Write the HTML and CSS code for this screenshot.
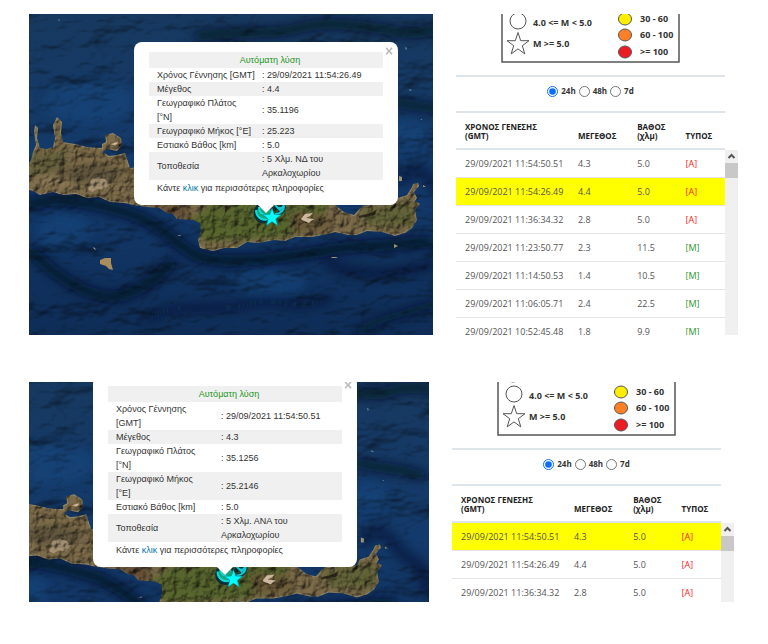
FILE: index.html
```
<!DOCTYPE html>
<html lang="el">

<head>
    <meta charset="UTF-8">
    <meta name="viewport" content="width=device-width, initial-scale=1.0">
    <title>Σεισμικότητα</title>
    <link rel="stylesheet" href="styles.css">
</head>

<body>
    <!-- shared drawings: base map and legend symbols -->
    <svg class="shared" width="0" height="0" aria-hidden="true">
        <defs>
            <linearGradient id="sea" x1="0" y1="0" x2="0" y2="1">
                <stop offset="0" stop-color="#173960" />
                <stop offset="0.5" stop-color="#133a6c" />
                <stop offset="1" stop-color="#0e2c56" />
            </linearGradient>
            <filter id="soft" x="-20%" y="-50%" width="140%" height="200%">
                <feGaussianBlur stdDeviation="5" />
            </filter>
            <filter id="soft-land">
                <feGaussianBlur stdDeviation="3" />
            </filter>
            <filter id="seabed" x="0" y="0" width="100%" height="100%" color-interpolation-filters="sRGB">
                <feTurbulence type="fractalNoise" baseFrequency="0.018 0.03" numOctaves="4" seed="21" />
                <feDiffuseLighting surfaceScale="8" diffuseConstant="1.15" lighting-color="#ffffff">
                    <feDistantLight azimuth="235" elevation="60" />
                </feDiffuseLighting>
            </filter>
            <filter id="relief" x="0" y="0" width="100%" height="100%" color-interpolation-filters="sRGB">
                <feTurbulence type="fractalNoise" baseFrequency="0.12" numOctaves="3" seed="4" />
                <feDiffuseLighting surfaceScale="3" diffuseConstant="1.1" lighting-color="#ffffff">
                    <feDistantLight azimuth="225" elevation="55" />
                </feDiffuseLighting>
            </filter>
            <path id="coast" d="M-2 153L2 146 4 138 7 131 5 118 6 111 9 114 8 124 11 134 18 135 24 133 26 124 24 111 28 103 33 108 32 119 34 128 46 130 58 133 73 134 73 130 77 128 76 121 84 119 92 124 93 131 88 137 78 135 74 138 80 142 88 141 96 139 101 154 140 150 220 150 290 160 306 191 315 198 325 201 333 192 350 190 366 190 369 184 378 181 383 173 384 170 389 169 390 172 385 178 388 184 386 187 391 190 386 196 388 206 383 214 376 219 366 222 353 218 338 217 328 221 319 221 306 218 299 220 283 223 266 223 256 227 246 226 229 229 218 228 208 234 196 234 184 237 171 234 169 226 172 217 171 209 164 206 148 205 144 200 138 199 130 194 118 193 104 191 96 189 81 188 70 183 58 184 47 180 34 181 24 178 11 181 6 178 -2 175Z" />
            <clipPath id="land-clip">
                <use href="#coast" />
            </clipPath>
        </defs>

        <symbol id="crete" viewBox="0 0 445 325">
            <rect width="445" height="325" fill="url(#sea)" />
            <g filter="url(#soft)" fill="none" stroke="#04101f" stroke-linecap="round">
                <path d="M0 190C30 182 60 188 95 198S140 225 165 240S280 240 300 236S350 232 400 228" stroke-width="11" opacity="0.8" />
                <path d="M5 240C30 265 60 282 82 283S130 262 142 250" stroke-width="11" opacity="0.75" />
                <path d="M120 304C150 285 190 300 220 290S260 300 300 285" stroke-width="7" opacity="0.5" />
                <path d="M300 250C330 262 360 262 405 250" stroke-width="12" opacity="0.4" />
                <path d="M330 318C350 302 380 300 404 290" stroke-width="8" opacity="0.6" />
                <path d="M368 88C385 94 400 90 430 100M170 22C205 16 240 22 270 14S340 12 370 18S400 8 440 14" stroke-width="10" opacity="0.7" />
                <path d="M375 165C395 140 400 175 420 185S430 215 445 220" stroke-width="14" opacity="0.4" />
            </g>
            <g filter="url(#soft)" fill="#17467e" opacity="0.6">
                <ellipse cx="35" cy="218" rx="28" ry="18" />
                <ellipse cx="240" cy="268" rx="38" ry="14" />
                <ellipse cx="60" cy="88" rx="45" ry="22" />
                <ellipse cx="378" cy="122" rx="20" ry="14" />
            </g>
            <rect class="shade" width="445" height="325" filter="url(#seabed)" opacity="0.75" />

            <g clip-path="url(#land-clip)">
                <use href="#coast" fill="#7d6c4a" stroke="#968968" stroke-width="2" />
                <g filter="url(#soft-land)">
                    <path d="M160 206L185 188H300L290 215 250 224 175 228Z" fill="#59662f" />
                    <path d="M330 195L385 188 385 212 340 212Z" fill="#626338" />
                    <path d="M0 140L40 136 34 156 0 162Z" fill="#67623e" />
                    <ellipse cx="60" cy="160" rx="34" ry="9" fill="#62563d" />
                    <ellipse cx="25" cy="168" rx="18" ry="5" fill="#907b58" />
                    <path d="M110 190L155 191 163 203 150 205Z" fill="#644d35" />
                    <path d="M262 198L300 200 300 216 262 218Z" fill="#6a5a38" />
                </g>
                <path d="M61 166l8-3 7 2 5 5-5 6-8-1-4 3-7-3 5-3z" fill="#b8a284" opacity="0.7" />
                <path d="M81 130l8-2-2 4z" fill="#d9ba93" />
                <path d="M330 202l12-3 6-4-2 6-16 3zM196 192l6 0-6 7z" fill="#382e20" />
                <rect class="shade" width="445" height="325" filter="url(#relief)" />
                <path d="M272 205l4-5 8-1-3 3-4 2 8 1-3 2-2 2-7-3z" fill="#cdb8a0" />
            </g>
            <path d="M71 246l5-2 6 0 0 5 2 7-4-1-3-3-6-2z" fill="#a98d5b" />
            <path d="M64 233l2 1 1 2-2-1zM302 243h7l-2 1h-4zM365 230l4 2-4 2zM370 162l3 1 0 4-3 0zM394 171l3 2-3 0zM148 222l3-1 1 1z" fill="#9a9474" />
            <path d="M29 5l2 1-1 1zM376 33l2 1-1 2zM380 75l3 1-2 1zM391 105l2 0 0 1z" fill="#75939c" />

            <!-- epicentres -->
            <circle cx="235" cy="199" r="9" fill="#13a779" stroke="#06303a" stroke-width="3" />
            <path d="M227 196c0 8 8 12 15 8M230 193c0 5 3 8 7 8" fill="none" stroke="#10d9dc" stroke-width="2" />
            <path d="M246 191l5 5 4-5M246 200c5 0 9-3 9-8M248 194h7" fill="none" stroke="#06303a" stroke-width="4" />
            <path d="M246 191l5 5 4-5M246 200c5 0 9-3 9-8M248 194h7" fill="none" stroke="#10c9d2" stroke-width="2" />
            <path d="M243 194l2.300 6.500 7 .2-5.500 4.200 2 6.800-5.800-4-5.800 4 2-6.800-5.500-4.200 7-.2z" fill="#00ffff" stroke="#0b7f86" stroke-width="0.600" />
        </symbol>

        <symbol id="legend-signs" viewBox="0 0 180 54">
            <path d="M1 -2V53H178V-2" fill="none" stroke="#555" stroke-width="1.500" />
            <g fill="#fff" stroke="#555">
                <circle cx="16" cy="-7" r="7" />
                <circle cx="17" cy="12" r="8" />
                <path d="M17 23.500l2.700 8.200h8.300l-6.700 5 2.500 8.200-6.800-5-6.800 5 2.500-8.200-6.700-5h8.300z" />
            </g>
            <g stroke="#555">
                <ellipse cx="124" cy="10" rx="6.500" ry="6" fill="#ffee00" />
                <ellipse cx="124" cy="26" rx="6.500" ry="6" fill="#ff7f27" />
                <ellipse cx="124" cy="43" rx="6.500" ry="6" fill="#ed1c24" />
            </g>
        </symbol>
    </svg>

    <section class="view view-large">
        <div class="map">
            <svg class="map-image" viewBox="0 0 404 321" preserveAspectRatio="xMinYMin slice">
                <use href="#crete" width="445" height="325" />
            </svg>
            <div class="popup popup-first">
                <button class="popup-close" aria-label="Κλείσιμο">×</button>
                <table class="popup-table">
                    <colgroup><col class="popup-label"><col></colgroup>
                    <tr><th colspan="2">Αυτόματη λύση</th></tr>
                    <tr><td>Χρόνος Γέννησης [GMT]</td><td>: 29/09/2021 11:54:26.49</td></tr>
                    <tr><td>Μέγεθος</td><td>: 4.4</td></tr>
                    <tr><td>Γεωγραφικό Πλάτος<br>[°N]</td><td>: 35.1196</td></tr>
                    <tr><td>Γεωγραφικό Μήκος [°E]</td><td>: 25.223</td></tr>
                    <tr><td>Εστιακό Βάθος [km]</td><td>: 5.0</td></tr>
                    <tr><td>Τοποθεσία</td><td>: 5 Χλμ. ΝΔ του<br>Αρκαλοχωρίου</td></tr>
                </table>
                <p class="popup-more">Κάντε <a href="#">κλικ</a> για περισσότερες πληροφορίες</p>
            </div>
        </div>

        <div class="panel">
            <svg class="legend" viewBox="0 5 180 49" width="180" height="49">
                <use href="#legend-signs" width="180" height="54" />
                <text x="32" y="17">4.0 &lt;= M &lt; 5.0</text>
                <text x="32" y="38">M &gt;= 5.0</text>
                <text x="139" y="13">30 - 60</text>
                <text x="139" y="29">60 - 100</text>
                <text x="139" y="46">&gt;= 100</text>
            </svg>
            <form class="filter">
                <label><input type="radio" name="range1" checked>24h</label>
                <label><input type="radio" name="range1">48h</label>
                <label><input type="radio" name="range1">7d</label>
            </form>
            <div class="list">
                <table class="events">
                    <thead>
                        <tr><th>ΧΡΟΝΟΣ ΓΕΝΕΣΗΣ<br>(GMT)</th><th>ΜΕΓΕΘΟΣ</th><th>ΒΑΘΟΣ<br>(χλμ)</th><th>ΤΥΠΟΣ</th></tr>
                    </thead>
                    <tbody>
                        <tr><td>29/09/2021 11:54:50.51</td><td>4.3</td><td>5.0</td><td class="auto">[A]</td></tr>
                        <tr class="selected"><td>29/09/2021 11:54:26.49</td><td>4.4</td><td>5.0</td><td class="auto">[A]</td></tr>
                        <tr><td>29/09/2021 11:36:34.32</td><td>2.8</td><td>5.0</td><td class="auto">[A]</td></tr>
                        <tr><td>29/09/2021 11:23:50.77</td><td>2.3</td><td>11.5</td><td class="manual">[M]</td></tr>
                        <tr><td>29/09/2021 11:14:50.53</td><td>1.4</td><td>10.5</td><td class="manual">[M]</td></tr>
                        <tr><td>29/09/2021 11:06:05.71</td><td>2.4</td><td>22.5</td><td class="manual">[M]</td></tr>
                        <tr><td>29/09/2021 10:52:45.48</td><td>1.8</td><td>9.9</td><td class="manual">[M]</td></tr>
                    </tbody>
                </table>
                <div class="scrollbar">
                    <svg width="13" height="13" viewBox="0 0 13 13"><path d="M3.500 8l3-3 3 3" /></svg>
                    <div class="thumb"></div>
                </div>
            </div>
        </div>
    </section>

    <section class="view view-small">
        <div class="map">
            <svg class="map-image" viewBox="39 7 399 220" preserveAspectRatio="xMinYMin slice">
                <use href="#crete" width="445" height="325" />
            </svg>
            <div class="popup popup-second">
                <button class="popup-close" aria-label="Κλείσιμο">×</button>
                <table class="popup-table">
                    <colgroup><col class="popup-label"><col></colgroup>
                    <tr><th colspan="2">Αυτόματη λύση</th></tr>
                    <tr><td>Χρόνος Γέννησης<br>[GMT]</td><td>: 29/09/2021 11:54:50.51</td></tr>
                    <tr><td>Μέγεθος</td><td>: 4.3</td></tr>
                    <tr><td>Γεωγραφικό Πλάτος<br>[°N]</td><td>: 35.1256</td></tr>
                    <tr><td>Γεωγραφικό Μήκος<br>[°E]</td><td>: 25.2146</td></tr>
                    <tr><td>Εστιακό Βάθος [km]</td><td>: 5.0</td></tr>
                    <tr><td>Τοποθεσία</td><td>: 5 Χλμ. ΑΝΑ του<br>Αρκαλοχωρίου</td></tr>
                </table>
                <p class="popup-more">Κάντε <a href="#">κλικ</a> για περισσότερες πληροφορίες</p>
            </div>
        </div>

        <div class="panel">
            <svg class="legend" viewBox="0 0 180 54" width="180" height="54">
                <use href="#legend-signs" width="180" height="54" />
                <text x="32" y="17">4.0 &lt;= M &lt; 5.0</text>
                <text x="32" y="38">M &gt;= 5.0</text>
                <text x="139" y="13">30 - 60</text>
                <text x="139" y="29">60 - 100</text>
                <text x="139" y="46">&gt;= 100</text>
            </svg>
            <form class="filter">
                <label><input type="radio" name="range2" checked>24h</label>
                <label><input type="radio" name="range2">48h</label>
                <label><input type="radio" name="range2">7d</label>
            </form>
            <div class="list">
                <table class="events">
                    <thead>
                        <tr><th>ΧΡΟΝΟΣ ΓΕΝΕΣΗΣ<br>(GMT)</th><th>ΜΕΓΕΘΟΣ</th><th>ΒΑΘΟΣ<br>(χλμ)</th><th>ΤΥΠΟΣ</th></tr>
                    </thead>
                    <tbody>
                        <tr class="selected"><td>29/09/2021 11:54:50.51</td><td>4.3</td><td>5.0</td><td class="auto">[A]</td></tr>
                        <tr><td>29/09/2021 11:54:26.49</td><td>4.4</td><td>5.0</td><td class="auto">[A]</td></tr>
                        <tr><td>29/09/2021 11:36:34.32</td><td>2.8</td><td>5.0</td><td class="auto">[A]</td></tr>
                    </tbody>
                </table>
                <div class="scrollbar">
                    <svg width="13" height="13" viewBox="0 0 13 13"><path d="M3.500 8l3-3 3 3" /></svg>
                    <div class="thumb"></div>
                </div>
            </div>
        </div>
    </section>
</body>

</html>
```

FILE: styles.css
```
* {
    box-sizing: border-box;
}

body {
    margin: 0;
    padding: 14px 30px 14px 29px;
    background-color: #fff;
    font-family: "Open Sans", "Noto Sans", sans-serif;
    color: #555;
}

.shared {
    position: absolute;
}

.view {
    display: grid;
    grid-template-columns: minmax(0, 1fr) 282px;
    gap: 23px;
}

.view-large {
    height: 321px;
    margin-bottom: 47px;
}

.view-small {
    height: 220px;
    margin-right: 4px;
}

/* map */
.map {
    position: relative;
    overflow: hidden;
    background-color: #0d2c57;
}

.map-image {
    display: block;
    width: 100%;
    height: 100%;
}

.shade {
    mix-blend-mode: multiply;
}

.popup {
    position: absolute;
    width: 264px;
    padding: 10px 15px;
    background-color: #fff;
    border-radius: 8px;
    font: 9px/14px "Liberation Sans", Arial, sans-serif;
    color: #333;
}

.popup::after {
    content: "";
    position: absolute;
    top: 100%;
    left: 50%;
    margin-left: -8px;
    border: 8px solid transparent;
    border-top-color: #fff;
    border-bottom-width: 0;
}

.popup-first {
    left: 105px;
    bottom: 130px;
}

.popup-second {
    left: 64px;
    bottom: 35px;
}

.popup-close {
    position: absolute;
    top: 2px;
    right: 2px;
    width: 14px;
    height: 14px;
    padding: 0;
    border: none;
    background: none;
    font: bold 14px/14px "Liberation Sans", Arial, sans-serif;
    color: #bbb;
    cursor: pointer;
}

.popup-table {
    width: 100%;
    border-collapse: collapse;
    table-layout: fixed;
}

.popup-label {
    width: 105px;
}

.popup-table th {
    padding: 1px 0 1px 8px;
    font-weight: normal;
    color: #1c961c;
}

.popup-table tr:nth-child(odd) {
    background-color: #f0f0f0;
}

.popup-table td {
    padding: 0 0 0 8px;
    white-space: nowrap;
}

.popup-more {
    margin: 0;
    padding: 1px 8px 0;
    white-space: nowrap;
}

.popup-more a {
    color: #0078a8;
    text-decoration: none;
}

/* legend, filter and list */
.panel {
    overflow: hidden;
}

.legend {
    display: block;
    margin: 0 0 12px 45px;
}

.legend text {
    font: bold 9px "Open Sans", "Noto Sans", sans-serif;
    fill: #333;
}

.filter {
    display: flex;
    justify-content: center;
    align-items: center;
    gap: 3px;
    height: 36px;
    margin-right: 13px;
    padding-bottom: 6px;
    border-top: 2px solid #dee5ea;
    font-size: 8px;
    line-height: 12px;
    font-weight: bold;
    color: #333;
}

.filter label {
    display: flex;
    align-items: center;
    gap: 3px;
}

.filter input {
    width: 11px;
    height: 11px;
    margin: 0;
    accent-color: #0d6efd;
}

.list {
    display: flex;
}

.events {
    flex: 1;
    border-collapse: separate;
    border-spacing: 0;
    table-layout: fixed;
    font-size: 9px;
    line-height: 12px;
}

.events th {
    height: 39px;
    padding: 0 0 8px 9px;
    border-top: 2px solid #dee5ea;
    border-bottom: 2px solid #dee5ea;
    font-size: 8px;
    line-height: 9px;
    text-align: left;
    vertical-align: bottom;
    color: #222;
}

.events th:nth-child(1) {
    width: 42%;
}

.events th:nth-child(2) {
    width: 22%;
}

.events th:nth-child(3) {
    width: 18%;
}

.events td {
    height: 28px;
    padding: 0 0 0 9px;
    border-bottom: 1px solid #e4e4e4;
    white-space: nowrap;
}

.events .selected {
    background-color: #ff0;
}

.events .auto {
    color: #f22;
}

.events .manual {
    color: #2a962a;
}

.scrollbar {
    width: 13px;
    margin-top: 39px;
    background-color: #f0f0f0;
}

.scrollbar svg {
    display: block;
    fill: none;
    stroke: #555;
    stroke-width: 2;
}

.thumb {
    height: 15px;
    background-color: #c8c8c8;
}
```
